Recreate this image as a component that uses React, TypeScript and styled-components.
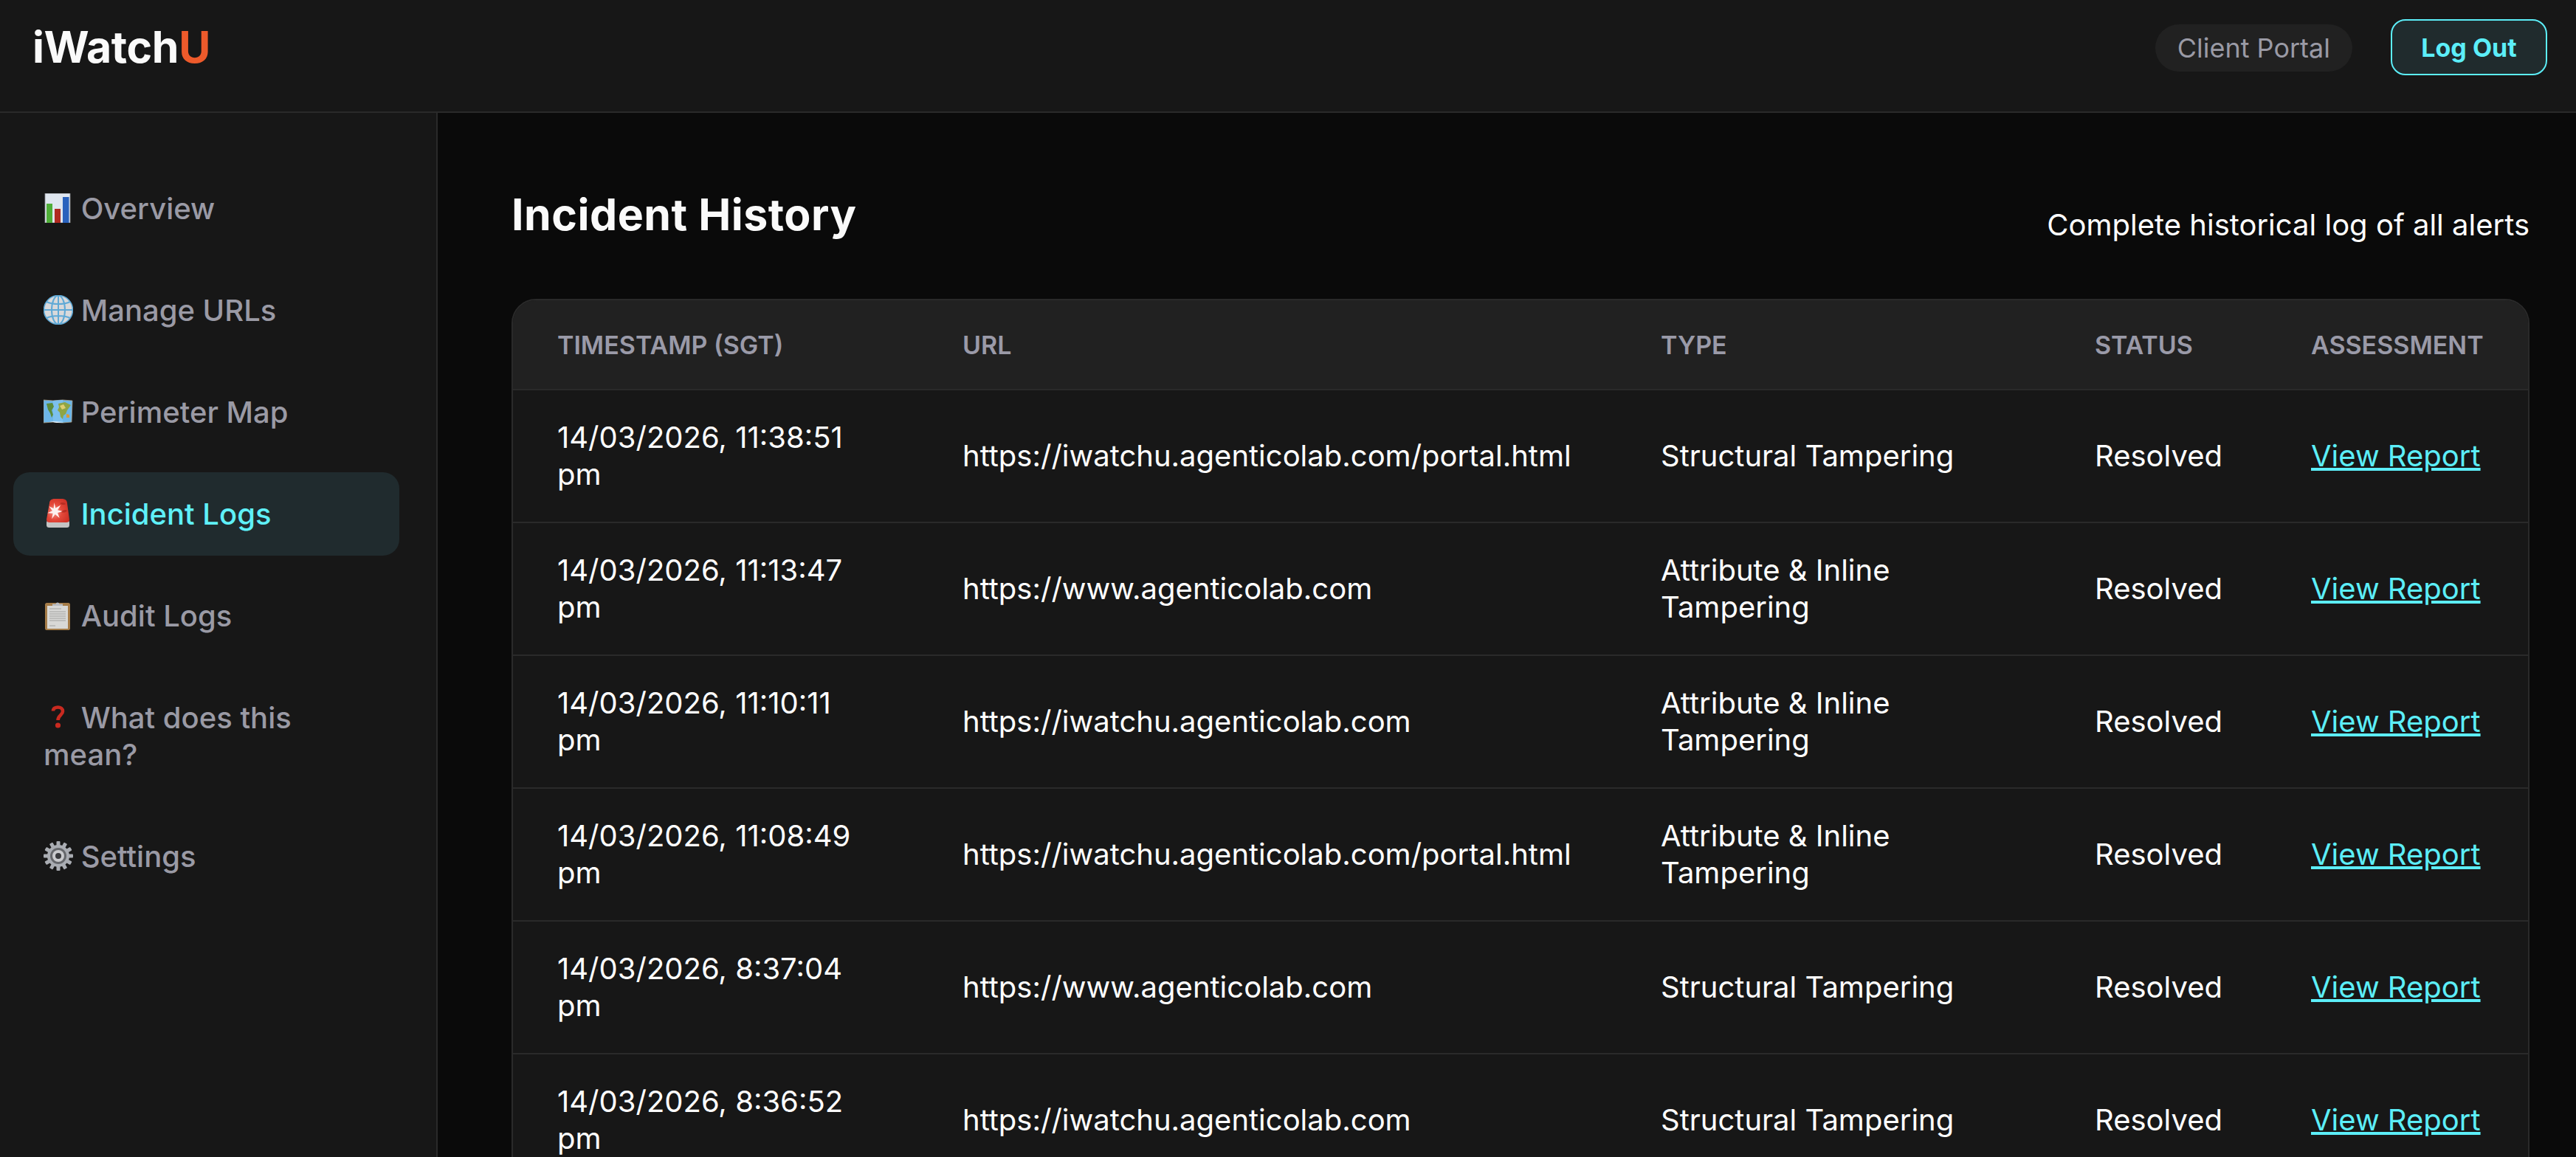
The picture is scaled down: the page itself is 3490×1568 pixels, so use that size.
import React, { ReactNode } from "react";
import styled, { createGlobalStyle } from "styled-components";

const GlobalStyle = createGlobalStyle`
  html, body {
    margin: 0;
    height: 1568px;
    overflow: hidden;
    background: #0a0a0a;
    font-family: Inter, "Liberation Sans", sans-serif;
  }
`;

const Page = styled.div`
  display: flex;
  flex-direction: column;
  height: 1568px;
  overflow: hidden;
`;

const TopBar = styled.header`
  display: flex;
  flex: none;
  align-items: center;
  justify-content: space-between;
  box-sizing: border-box;
  height: 153px;
  padding: 0 39px 23px 44px;
  background: #171717;
  border-bottom: 2px solid #2a2a2a;
`;

const Logo = styled.div`
  margin-bottom: 2px;
  font-size: 59px;
  font-weight: 700;
  letter-spacing: -0.4px;
  color: #fafafa;
`;

const LogoAccent = styled.span`
  color: #ed5a2b;
`;

const TopActions = styled.div`
  display: flex;
  align-items: center;
  gap: 52px;
`;

const PortalPill = styled.a`
  display: flex;
  align-items: center;
  height: 64px;
  margin-top: 2px;
  padding: 0 30px;
  border-radius: 32px;
  background: #212121;
  color: #9a9aa5;
  font-size: 36px;
`;

const LogoutButton = styled.button`
  box-sizing: border-box;
  width: 212px;
  height: 76px;
  border: 2px solid #5ceef8;
  border-radius: 20px;
  background: #202b2d;
  color: #5ceef8;
  font-family: inherit;
  font-size: 34px;
  font-weight: 700;
`;

const Body = styled.div`
  display: flex;
  flex: 1;
  min-height: 0;
`;

const Sidebar = styled.aside`
  box-sizing: border-box;
  flex: none;
  width: 593px;
  padding: 73px 50px 0 18px;
  background: #171717;
  border-right: 2px solid #2a2a2a;
`;

const NavItem = styled.a<{ $active?: boolean }>`
  display: block;
  margin-bottom: 25px;
  padding: 31.5px 41px;
  border-radius: 22px;
  font-size: 40px;
  font-weight: 500;
  line-height: 50px;
  color: ${(p) => (p.$active ? "#5ff0f8" : "#9a9aa5")};
  background: ${(p) => (p.$active ? "#202b2e" : "transparent")};
`;

const Emoji = styled.svg`
  display: inline-block;
  width: 40px;
  height: 40px;
  vertical-align: -5px;
`;

const Main = styled.main`
  flex: 1;
  min-width: 0;
  padding: 96px 63px 0 100px;
`;

const PageHead = styled.div`
  display: flex;
  align-items: flex-start;
  justify-content: space-between;
  height: 156px;
`;

const Title = styled.h1`
  margin: 0;
  font-size: 59px;
  font-weight: 700;
  letter-spacing: 0.5px;
  line-height: 84px;
  color: #fafafa;
`;

const Subtitle = styled.p`
  margin: 31px 0 0;
  font-size: 40px;
  line-height: 50px;
  color: #fff;
`;

const Card = styled.div`
  border: 2px solid #2a2a2a;
  border-radius: 33px;
  background: #171717;
  overflow: hidden;
`;

const Table = styled.table`
  width: 100%;
  border-collapse: collapse;
  table-layout: fixed;
`;

const Col = styled.col<{ $width: number }>`
  width: ${(p) => p.$width}px;
`;

const Th = styled.th`
  height: 120px;
  padding: 0 0 0 60px;
  background: #212121;
  border-bottom: 2px solid #2a2a2a;
  color: #9a9aa8;
  font-size: 34px;
  font-weight: 600;
  text-align: left;
  text-transform: uppercase;
`;

const Td = styled.td`
  height: 178px;
  padding: 0 50px 0 60px;
  border-bottom: 2px solid #2a2a2a;
  color: #fff;
  font-size: 40px;
  line-height: 50px;
`;

const ReportLink = styled.a`
  color: #5ceef8;
  text-decoration: underline;
  white-space: nowrap;
`;

const ChartEmoji = () => (
  <Emoji viewBox="0 0 40 40">
    <rect x="2" y="0" width="34" height="40" fill="#dfe6ef" stroke="#8c8f94" strokeWidth="0.8" />
    <rect x="4" y="14" width="8" height="26" fill="#4fae38" />
    <rect x="15" y="21" width="8" height="19" fill="#b02a20" />
    <rect x="26" y="5" width="8.5" height="35" fill="#2a62bd" />
  </Emoji>
);

const GlobeEmoji = () => (
  <Emoji viewBox="0 0 40 40">
    <circle cx="20" cy="20" r="19.5" fill="#d9d9db" stroke="#5fa9d6" strokeWidth="1.6" />
    <g fill="none" stroke="#5fa9d6" strokeWidth="2">
      <ellipse cx="20" cy="20" rx="9" ry="19.5" />
      <path d="M20 0.5v39M0.5 20h39M4 9c8 4 24 4 32 0M4 31c8-4 24-4 32 0" />
    </g>
  </Emoji>
);

const MapEmoji = () => (
  <Emoji viewBox="0 0 40 40">
    <path d="M0 4l13 1 13-1 13 1-1 29-12 1-13-1-13 1z" fill="#6db6e8" stroke="#a89a80" strokeWidth="0.8" />
    <path d="M13 5l13-1v31l-13-1z" fill="#7cc0ee" />
    <path d="M4 9l8-1 2 5-3 5 2 6-2 4-2-6-3-5z" fill="#5d8c3a" />
    <path d="M20 9l9-2 8 4-5 7-2 5-3 2-1 5-3-3-1-6-3-3 2-4z" fill="#8fa545" />
    <path d="M22 12l5-2 3 5-5 2z" fill="#e0cf70" />
    <path d="M31 23l4 1 0 4-4 0z" fill="#d69a3a" />
    <path d="M8 33l20 1-10 1z" fill="#f2f6fa" />
  </Emoji>
);

const SirenEmoji = () => (
  <Emoji viewBox="0 0 40 40">
    <defs>
      <radialGradient id="dome" cx="0.35" cy="0.55" r="0.75">
        <stop offset="0" stopColor="#f59a8e" />
        <stop offset="0.45" stopColor="#e4483a" />
        <stop offset="1" stopColor="#c92d22" />
      </radialGradient>
    </defs>
    <rect x="4" y="29" width="31" height="10" rx="3.5" fill="#c4c4c4" />
    <path d="M8 6c0-4 3-6 7-6h10c4 0 7 2 7 6l3 22c0 3-2 4-4 4H8c-2 0-4-1-4-4z" fill="url(#dome)" />
    <path d="M14.5 5l1.8 7.500 7-4-4.200 6.800 7 1.800-7 1.800 2.600 7.200-6-5-4.500 6.200 1.400-7.500-7.300-.6 6.600-3-4.400-6 6.100 2.800z" fill="#fdf1ef" />
    <path d="M22 6c3-2 7-1 8 1-2 2-6 1-8-1zM24 18c2-3 6-4 8-2-2 3-6 3-8 2z" fill="#a9261d" opacity="0.7" />
  </Emoji>
);

const ClipboardEmoji = () => (
  <Emoji viewBox="0 0 40 40">
    <rect x="2" y="3" width="34" height="37" rx="2.5" fill="#a57c48" />
    <rect x="5" y="7" width="28" height="31" fill="#d8d8d6" />
    <path d="M8 11h16M8 15h22M8 18h22M8 21h22M8 24h22M8 27h22M8 34h8" stroke="#b4b4b2" strokeWidth="1.6" />
    <path d="M12 7V4.500h4.500a2.600 2.600 0 0 1 5 0H26V7z" fill="#b9bcc2" />
  </Emoji>
);

const QuestionEmoji = () => (
  <Emoji viewBox="0 0 40 40">
    <path d="M13 11.500c0-3.500 3-5 6.500-5s6.500 1.800 6.500 5.500c0 5-6.500 5.500-6.500 12" fill="none" stroke="#c92a20" strokeWidth="4.600" />
    <circle cx="19.500" cy="31" r="3.600" fill="#c92a20" />
  </Emoji>
);

const GearEmoji = () => (
  <Emoji viewBox="0 0 40 40">
    {Array.from({ length: 12 }, (_, i) => (
      <rect key={i} x="17.500" y="0" width="5" height="8" rx="1" fill="#a9acb2" transform={`rotate(${i * 30} 20 20)`} />
    ))}
    <circle cx="20" cy="20" r="15" fill="#a9acb2" />
    <circle cx="20" cy="20" r="11" fill="#65676b" />
    <circle cx="20" cy="20" r="8" fill="#c9cacd" />
    <circle cx="20" cy="20" r="4" fill="#3a3b3e" />
  </Emoji>
);

const navItems: { icon: ReactNode; label: string; active?: boolean }[] = [
  { icon: <ChartEmoji />, label: "Overview" },
  { icon: <GlobeEmoji />, label: "Manage URLs" },
  { icon: <MapEmoji />, label: "Perimeter Map" },
  { icon: <SirenEmoji />, label: "Incident Logs", active: true },
  { icon: <ClipboardEmoji />, label: "Audit Logs" },
  { icon: <QuestionEmoji />, label: "What does this mean?" },
  { icon: <GearEmoji />, label: "Settings" },
];

const incidents = [
  ["14/03/2026, 11:38:51 pm", "https://iwatchu.agenticolab.com/portal.html", "Structural Tampering"],
  ["14/03/2026, 11:13:47 pm", "https://www.agenticolab.com", "Attribute & Inline Tampering"],
  ["14/03/2026, 11:10:11 pm", "https://iwatchu.agenticolab.com", "Attribute & Inline Tampering"],
  ["14/03/2026, 11:08:49 pm", "https://iwatchu.agenticolab.com/portal.html", "Attribute & Inline Tampering"],
  ["14/03/2026, 8:37:04 pm", "https://www.agenticolab.com", "Structural Tampering"],
  ["14/03/2026, 8:36:52 pm", "https://iwatchu.agenticolab.com", "Structural Tampering"],
];

const App = () => (
  <Page>
    <GlobalStyle />
    <TopBar>
      <Logo>
        iWatch<LogoAccent>U</LogoAccent>
      </Logo>
      <TopActions>
        <PortalPill>Client Portal</PortalPill>
        <LogoutButton>Log Out</LogoutButton>
      </TopActions>
    </TopBar>
    <Body>
      <Sidebar>
        {navItems.map((item) => (
          <NavItem key={item.label} $active={item.active}>
            {item.icon} {item.label}
          </NavItem>
        ))}
      </Sidebar>
      <Main>
        <PageHead>
          <Title>Incident History</Title>
          <Subtitle>Complete historical log of all alerts</Subtitle>
        </PageHead>
        <Card>
          <Table>
            <colgroup>
              <Col $width={549} />
              <Col $width={946} />
              <Col $width={588} />
              <Col $width={293} />
              <Col $width={354} />
            </colgroup>
            <thead>
              <tr>
                <Th>Timestamp (SGT)</Th>
                <Th>URL</Th>
                <Th>Type</Th>
                <Th>Status</Th>
                <Th>Assessment</Th>
              </tr>
            </thead>
            <tbody>
              {incidents.map(([time, url, type]) => (
                <tr key={time}>
                  <Td>{time}</Td>
                  <Td>{url}</Td>
                  <Td>{type}</Td>
                  <Td>Resolved</Td>
                  <Td>
                    <ReportLink>View Report</ReportLink>
                  </Td>
                </tr>
              ))}
            </tbody>
          </Table>
        </Card>
      </Main>
    </Body>
  </Page>
);

export default App;
